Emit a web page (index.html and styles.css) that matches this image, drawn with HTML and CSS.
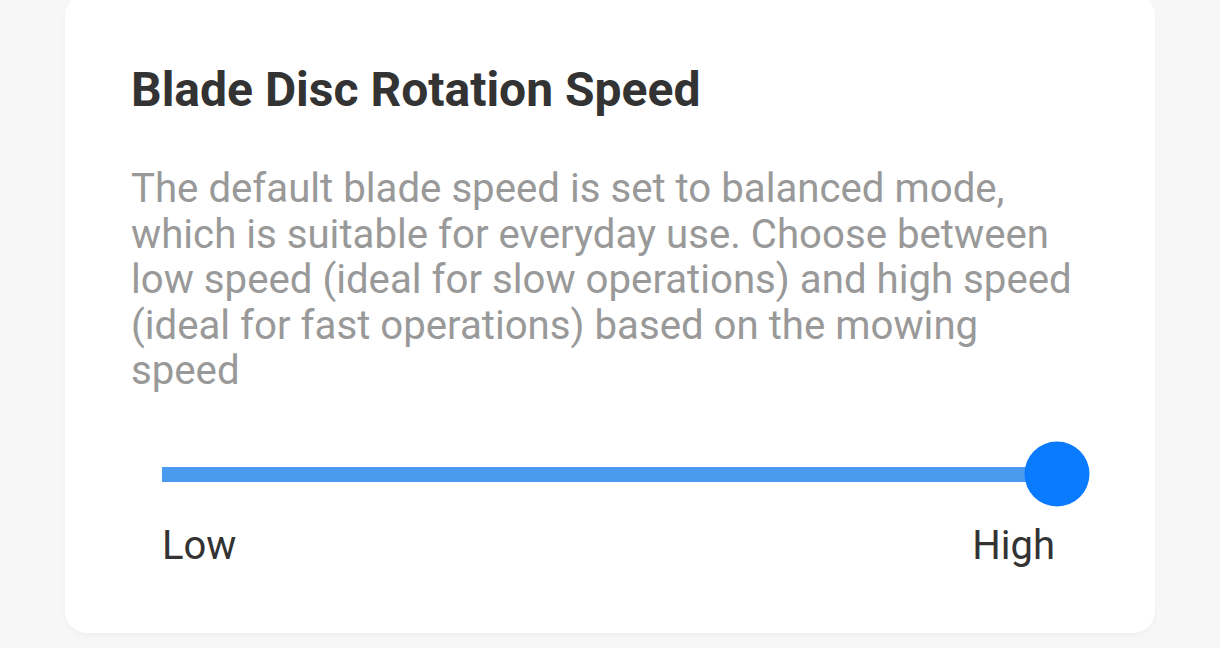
FILE: index.html
```html
<!DOCTYPE html>
<html lang="en">
<head>
<meta charset="utf-8">
<title>Blade Disc Rotation Speed</title>
<link rel="stylesheet" href="styles.css">
</head>
<body>
<div class="page">
  <section class="card">
    <h1 class="title">Blade Disc Rotation Speed</h1>
    <p class="desc">The default blade speed is set to balanced mode, which is suitable for everyday use. Choose between low speed (ideal for slow operations) and high speed (ideal for fast operations) based on the mowing speed</p>
    <div class="slider">
      <div class="track">
        <div class="fill" style="width:100%"></div>
        <div class="thumb" style="left:100%"></div>
      </div>
      <div class="labels">
        <span>Low</span>
        <span>High</span>
      </div>
    </div>
  </section>
</div>
</body>
</html>
```
FILE: styles.css
```css
html, body {
  margin: 0;
  padding: 0;
  background: #f7f7f7;
}
body {
  font-family: Roboto, "Noto Sans", sans-serif;
  width: 1220px;
  height: 648px;
  overflow: hidden;
}
.page {
  padding: 0 65px;
}
.card {
  margin-top: -6px;
  height: 639px;
  box-sizing: border-box;
  background: #ffffff;
  border-radius: 22px;
  box-shadow: 0 3px 6px rgba(0, 0, 0, 0.03);
  padding: 68px 66px 0 66px;
  display: flex;
  flex-direction: column;
}
.title {
  margin: 0;
  font-size: 48px;
  line-height: 56px;
  font-weight: 700;
  color: #333333;
}
.desc {
  margin: 48px 0 0 0;
  font-size: 40.2px;
  line-height: 45.5px;
  color: #999999;
  width: 965px;
}
.slider {
  margin: 73px 0 0 31px;
  width: 895px;
}
.track {
  position: relative;
  height: 15px;
  background: #e6e6e6;
}
.fill {
  height: 100%;
  background: #4a9af0;
}
.thumb {
  position: absolute;
  top: 50%;
  width: 65px;
  height: 65px;
  border-radius: 50%;
  background: #0a7aff;
  transform: translate(-50%, -50%);
}
.labels {
  display: flex;
  justify-content: space-between;
  margin-top: 40px;
  padding-right: 2px;
  font-size: 40px;
  line-height: 48px;
  color: #333333;
}
```
